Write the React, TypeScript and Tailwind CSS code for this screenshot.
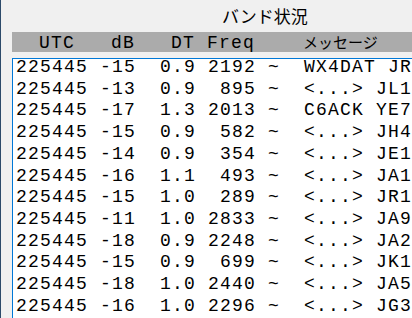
const rows = [
  '225445 -15  0.9 2192 ~  WX4DAT JR',
  '225445 -13  0.9  895 ~  <...> JL1',
  '225445 -17  1.3 2013 ~  C6ACK YE7',
  '225445 -15  0.9  582 ~  <...> JH4',
  '225445 -14  0.9  354 ~  <...> JE1',
  '225445 -16  1.1  493 ~  <...> JA1',
  '225445 -15  1.0  289 ~  <...> JR1',
  '225445 -11  1.0 2833 ~  <...> JA9',
  '225445 -18  0.9 2248 ~  <...> JA2',
  '225445 -15  0.9  699 ~  <...> JK1',
  '225445 -18  1.0 2440 ~  <...> JA5',
  '225445 -16  1.0 2296 ~  <...> JG3',
];

// 18px mono + 1.2px tracking keeps the 12px cell of the original font
const mono = "font-['Liberation_Mono','Courier_New',monospace] text-[18px] tracking-[1.2px]";

export default function App() {
  return (
    <div className="flex w-[412px] h-[318px] overflow-hidden bg-[#f0f0f0] text-black">
      {/* window edge */}
      <div className="w-px shrink-0 bg-[#2c4a6a]" />

      <div className="flex flex-1 flex-col min-w-0">
        {/* title */}
        <div className="h-8 shrink-0 pl-[221px] pt-[7px] text-[17px] leading-[17px] font-['Noto_Sans_CJK_JP',sans-serif]">
          バンド状況
        </div>

        {/* column header */}
        <div className={`ml-[11px] h-5 shrink-0 bg-[#ababab] pl-[3px] leading-5 whitespace-pre ${mono}`}>
          {'  UTC   dB   DT Freq    '}
          <span className="text-[15px] tracking-normal font-['Noto_Sans_CJK_JP',sans-serif]">
            メッセージ
          </span>
        </div>

        {/* decode list */}
        <div className="mt-[6px] ml-[11px] flex-1 overflow-hidden border-l border-t border-[#0078d7] bg-white">
          <div className={`-mt-[2px] pl-[3px] leading-[21.7px] whitespace-pre ${mono}`}>
            {rows.map((r, i) => (
              <div key={i}>{r}</div>
            ))}
          </div>
        </div>
      </div>
    </div>
  );
}
